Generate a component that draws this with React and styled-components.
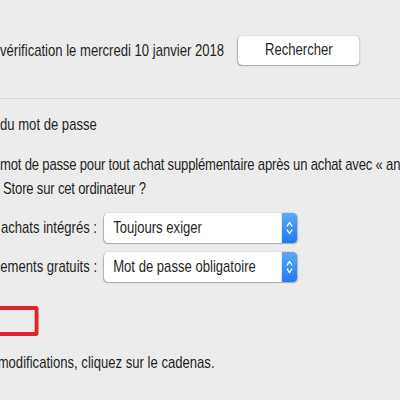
import React from 'react'
import styled, { createGlobalStyle } from 'styled-components'

const GlobalStyle = createGlobalStyle`
  html, body {
    margin:0;
    padding:0;
    background:#ececec;
  }
`

const Viewport = styled.div`
  width:400px;
  height:400px;
  overflow:hidden;
  background:#ececec;
`

// the screenshot is squeezed horizontally, so the whole pane is drawn wider and scaled down
const Pane = styled.div`
  width:520px;
  transform:scaleX(0.77);
  transform-origin:0 0;
  display:flex;
  flex-direction:column;
  font-family:"Liberation Sans", Arial, sans-serif;
  font-size:17px;
  color:#1f1f1f;
  white-space:nowrap;
`

const SearchRow = styled.div`
  display:flex;
  align-items:center;
  margin-top:35px;
  height:30px;
`

const Text = styled.div`
  line-height:24px;
  margin-left:${props => props.shift || 0}px;
  margin-top:${props => props.top || 0}px;
`

const Button = styled.div`
  width:158px;
  height:29px;
  margin-left:18px;
  background:#fff;
  border-radius:5px;
  box-shadow:0 0 0 0.5px rgba(0,0,0,0.12), 0 1px 1.5px rgba(0,0,0,0.25);
  display:flex;
  align-items:center;
  justify-content:center;
`

const Divider = styled.div`
  height:1px;
  background:#d6d6d6;
  margin-top:33px;
`

const Paragraph = styled.div`
  margin-top:16px;
  line-height:24px;
  letter-spacing:-0.25px;
`

const Field = styled.div`
  display:flex;
  align-items:center;
  margin-top:${props => props.top}px;
`

const Label = styled.div`
  width:126px;
  display:flex;
  justify-content:flex-end;
`

const Select = styled.div`
  width:251px;
  height:30px;
  margin-left:9px;
  background:#fff;
  border-radius:5px;
  box-shadow:0 0 0 0.5px rgba(0,0,0,0.12), 0 1px 1.5px rgba(0,0,0,0.25);
  display:flex;
  align-items:center;
  overflow:hidden;
`

const Value = styled.div`
  flex:1;
  padding-left:12px;
`

const Stepper = styled.div`
  width:20px;
  height:100%;
  background:linear-gradient(#5aa9f8, #1f7cf0);
  display:flex;
  align-items:center;
  justify-content:center;
`

const Highlight = styled.div`
  width:60px;
  height:22px;
  margin-top:24px;
  margin-left:-20px;
  border:solid #e1212b;
  border-width:4px 5px;
  border-radius:3px;
`

const Arrows = () => (
  <svg width="10" height="18" viewBox="0 0 10 18">
    <path d="M2 7 L5 3.5 L8 7 M2 11 L5 14.5 L8 11" fill="none" stroke="#fff" strokeWidth="1.6" strokeLinecap="round" strokeLinejoin="round"/>
  </svg>
)

const PopUp = ({ value }) => (
  <Select>
    <Value>{value}</Value>
    <Stepper><Arrows/></Stepper>
  </Select>
)

const App = () => {
  return (
    <Viewport>
      <GlobalStyle/>
      <Pane>
        <SearchRow>
          <Text top={2}>vérification le mercredi 10 janvier 2018</Text>
          <Button>Rechercher</Button>
        </SearchRow>
        <Divider/>
        <Text top={14}>du mot de passe</Text>
        <Paragraph>
          <div>mot de passe pour tout achat supplémentaire après un achat avec « anthony » sur l'App</div>
          <Text shift={4}>Store sur cet ordinateur ?</Text>
        </Paragraph>
        <Field top={12}>
          <Label>achats intégrés :</Label>
          <PopUp value="Toujours exiger"/>
        </Field>
        <Field top={9}>
          <Label>ements gratuits :</Label>
          <PopUp value="Mot de passe obligatoire"/>
        </Field>
        <Highlight/>
        <Text top={15} shift={-3}>modifications, cliquez sur le cadenas.</Text>
      </Pane>
    </Viewport>
  )
}

export default App
